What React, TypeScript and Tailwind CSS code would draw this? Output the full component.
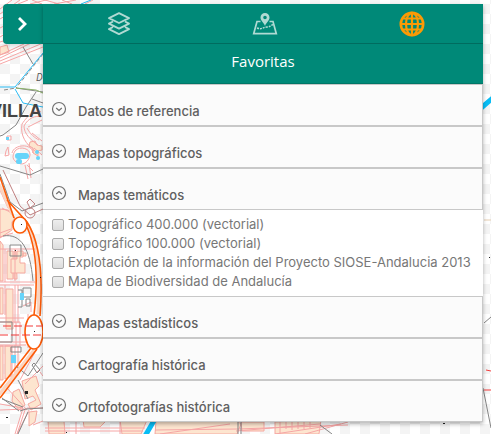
import React from "react";

const CheckerBackground = () => (
  <svg className="absolute inset-0 size-full" aria-hidden="true">
    <defs>
      <pattern id="checker" width="20" height="20" patternUnits="userSpaceOnUse">
        <rect width="20" height="20" fill="#fff" />
        <path d="M0 4h10v10H0zM10 14h10v6H10zM10 0h10v4H10z" fill="#f4f4f4" />
      </pattern>
    </defs>
    <rect width="100%" height="100%" fill="url(#checker)" />
  </svg>
);

const MapDrawing = () => (
  <svg className="absolute left-0 top-0" width="491" height="434" viewBox="0 0 491 434" fill="none" aria-hidden="true">
    {/* city blocks */}
    <g fill="#fde5cf" stroke="#f5a8a0" strokeWidth="1">
      <path d="M0 47l7-2 2 7-9 3zM0 209l8 1 7 8-3 4v8l-12 8z" />
      <path d="M0 242l3 4v36H0zM6 290h7v40H6zM7 252h6v28H7zM0 289h3v26H0zM16 252h-2v28h3z" transform="translate(0 -1)" />
      <path d="M11 259h6v-8h6v6h-3v6h5v10H11zM23 253h3v3h-3z" />
      <path d="M0 346h3v34H0zM5 346h6v30l-6 3z" />
      <path d="M13 392l6-3 6 16-6 5-7-9zM22 381l14-5 3 10-4 4 6 14-10 6-3-6 8-4-3-4-8 3z" />
      <path d="M30 142l5-1 2 4 5 1v4l-4 1v5l-5-3v-5l-4-2z" />
      <path d="M29 412l8-1-2 11-6 4zM83 420h24l-7 7H84zM120 420h27l-6 14h-19zM156 421l80-1 5 4-4 10h-82zM241 422h23v9h-22zM275 422l46-2-2 14h-44z" />
      <path d="M48 421h16l1 13H49z" />
    </g>
    {/* streets */}
    <g stroke="#f6a6a6" strokeWidth="1">
      <path d="M0 9l12-9M0 14l20-14M0 19l5-3M0 28l4-2M0 37l5-3M0 42l20-6M0 58l31-15M0 61l43-18M0 64l43-17M0 55l24-11M18 4l10-4M30 4l16-4M32 0l10 4M45 0l14 4M54 4l22-4M62 0l10 4M85 4l8-4" />
      <path d="M22 124c6-9 14-16 19-12M22 124c-2 12 4 20 13 27M24 126c4-8 12-11 17-9M24 126c0 8 7 14 14 19M27 128c3 6 8 10 12 12M28 127l14-7M32 133l10 8M15 151c5-6 16-2 15 4s-6 11-12 8-6-7-3-12zM12 153c2-9 20-10 21 0M25 165l3 14M29 163l2 15M27 165l6 6M6 151l2-4 1 8-4 1zM7 136h4v4H7zM34 148l8 7" />
      <path d="M0 186l10 22M0 190l8 18M10 212l-8-4M0 237l13-4M0 233l11-4" />
      <path d="M0 282h35M0 285h34M0 249h36M5 249v33M15 249v32M18 285v38M15 285v38M5 285v30M0 342h26M0 345h26M12 345v32M15 345v29M18 346v25M0 318h24M0 322h20v24H0M16 322v24M28 314v34M23 306l8-4v10" />
      <path d="M35 352L20 380M43 366L25 384M40 372l3 4M7 388l20 22M0 410l27-1M0 404l23 4-8 26M29 410l-12 24M27 408h16M33 425l10-4M25 410l-8 24" />
      <path d="M45 428h100M45 431h98M76 421v13M120 421v13M155 430l83-1 110-4M160 434l70-10M236 431l84-7M275 434l66-10M305 434l43-12M280 421v13M286 421v8M292 421v9M298 421v8M304 421v8M310 421v7" />
    </g>
    {/* railways, walls and survey lines */}
    <g stroke="#858585" strokeWidth="1">
      <path d="M23 47l10 17M36 92l-10 15-10 18-13 10-3 1M16 88l27 4M32 99l11 4M0 166l30 9 13-6M0 174l10 28 12 9 21-8M3 236c18-3 27 12 30 45" />
      <path d="M10 245h11v11H10zM23 288h8v9h-8zM26 299h4v7h-4zM18 290h4v17h-4M0 322h12v20H0M11 347h10v5H11zM34 363l6 7-3 3-5-8zM2 398l17 13M2 399l21 8M18 380l10 19M28 376l-12-10M43 353L28 376M20 411l6-2 17-1M28 412l-10 22M238 421v13M241 421v13M483 388l8 40M484 323l7-6M317 421l16-4M320 425l12 9" />
    </g>
    <path d="M43 54L16 88M4 90l12-2" stroke="#888" strokeDasharray="4 2" />
    <path d="M3 170l17 36 10 9 13-6M27 202l3-3 5 5-5 4zM25 213a5 5 0 1 0 10 0a5 5 0 1 0-10 0" stroke="#c08080" />
    <path d="M16 88l20 2 7 3" stroke="#8db36b" />
    <path d="M0 87h15l28-34M15 89l8 14 20 4M81 4L91 0" stroke="#2bbcf5" />
    <path d="M145 436l10-17M480 109l14-12" stroke="#08bdf5" strokeWidth="5" />
    <g fill="#67d4fa">
      <rect x="15" y="153" width="14" height="6" rx="3" />
      <rect x="16" y="159" width="6" height="5" rx="2" />
      <circle cx="37" cy="152" r="2" />
      <circle cx="38" cy="158" r="2" />
      <path d="M20 293h4v7h-4zM11 355h5v8h-5zM6 137h3v3H6z" />
    </g>
    <g stroke="#fbd5c0" strokeWidth="3">
      <path d="M24 220c14 15 16 45 14 94M-2 396l36-46M-2 182l14 32" />
    </g>
    <g stroke="#fc5b08" strokeWidth="1.6">
      <path d="M0 177l14 41M7 200l20 22c13 20 16 55 13 94M27 227c8 18 12 45 7 88M0 388l31-40M0 398l37-49" />
      <ellipse cx="20" cy="225" rx="7" ry="8" fill="#fff" />
      <ellipse cx="34" cy="332" rx="9" ry="17" fill="#fff" />
    </g>
    <path d="M3 326h40M0 335h43M486 370l5 1M484 390h7" stroke="#f13b3b" strokeDasharray="8 3" />
    <path d="M484 220h7" stroke="#e5cdb0" />
    <g fill="#222">
      <path d="M25 391h3v3h-3zM15 250h1v1h-1zM34 331h1v1h-1zM21 224h1v1h-1zM40 277h1v1h-1zM489 257h1v1h-1zM443 423h2v1h-2zM6 417h2v1h-2zM66 432h1v1h-1z" />
    </g>
  </svg>
);

const LayersIcon = () => (
  <svg width="24" height="24" viewBox="0 0 24 24" fill="none" stroke="#b0dad3" strokeWidth="1.9" strokeLinejoin="round" aria-hidden="true">
    <path d="M12 1.2l10 4.9-10 4.9-10-4.9zM6 9.5l-4 2.2 10 4.9 10-4.9-4-2.2M6 15l-4 2.2 10 4.9 10-4.9-4-2.2" />
  </svg>
);

const MapPinIcon = () => (
  <svg width="26" height="24" viewBox="0 0 26 24" fill="none" aria-hidden="true">
    <path d="M8.5 9.5H5L1.7 21.7h22.6L21 9.5h-3.5" stroke="#b0dad3" strokeWidth="1.7" />
    <path fillRule="evenodd" d="M13 1a4.5 4.5 0 0 1 4.5 4.5C17.5 9 14 10.5 13 14c-1-3.5-4.5-5-4.5-8.5A4.5 4.5 0 0 1 13 1zm0 2.7a1.8 1.8 0 1 0 0 3.6 1.8 1.8 0 0 0 0-3.6z" fill="#b0dad3" />
    <path d="M5 16c5 2 6-1 10-1s4-3 7-2" stroke="#b0dad3" strokeWidth="1.5" strokeDasharray="2 1" />
  </svg>
);

const GlobeIcon = () => (
  <svg width="26" height="26" viewBox="0 0 26 26" fill="none" stroke="#fb9a05" strokeWidth="2.2" aria-hidden="true">
    <circle cx="13" cy="13" r="11.2" strokeWidth="2.6" />
    <ellipse cx="13" cy="13" rx="6" ry="11.2" />
    <path d="M13 2v22M2 13h22M4 7.5h18M4 18.5h18" />
  </svg>
);

const CircleChevron = ({ open }: { open: boolean }) => (
  <svg className="shrink-0" width="16" height="16" viewBox="0 0 16 16" fill="none" stroke="#707070" strokeWidth="1.2" aria-hidden="true">
    <circle cx="8" cy="8" r="6.5" />
    <path d={open ? "M5.2 9L8 6.5 10.8 9" : "M5.2 7L8 9.5 10.8 7"} />
  </svg>
);

const groups = [
  { title: "Datos de referencia", layers: [] },
  { title: "Mapas topográficos", layers: [] },
  {
    title: "Mapas temáticos",
    layers: [
      "Topográfico 400.000 (vectorial)",
      "Topográfico 100.000 (vectorial)",
      "Explotación de la información del Proyecto SIOSE-Andalucia 2013",
      "Mapa de Biodiversidad de Andalucía",
    ],
  },
  { title: "Mapas estadísticos", layers: [] },
  { title: "Cartografía histórica", layers: [] },
  { title: "Ortofotografías histórica", layers: [] },
];

const tabs = [
  { label: "Capas", icon: <LayersIcon /> },
  { label: "Mapas", icon: <MapPinIcon /> },
  { label: "Favoritas", icon: <GlobeIcon /> },
];

export default function App() {
  return (
    <div className="relative min-h-screen overflow-hidden bg-white font-['Inter',sans-serif]">
      <CheckerBackground />
      <MapDrawing />
      <span className="absolute top-[70px] left-9 font-['Open_Sans',sans-serif] text-[10px] text-[#555] italic">De</span>
      <span className="absolute top-[101px] -left-2.5 font-['Liberation_Sans',sans-serif] text-[18px] leading-5 font-bold text-[#444]">VILLA</span>

      <div className="relative flex items-start pt-1 pr-2 pl-[3px]">
        <button type="button" aria-label="Cerrar panel" className="flex h-10 w-10 shrink-0 items-center justify-center rounded-l bg-[#008978] shadow-md">
          <svg width="12" height="16" viewBox="0 0 12 16" fill="none" stroke="#fff" strokeWidth="2.8" aria-hidden="true">
            <path d="M2 2l6 6-6 6" />
          </svg>
        </button>
        <main className="min-w-0 flex-1 bg-white shadow-[0_2px_4px_rgba(0,0,0,0.3)]">
          <nav className="grid h-10 grid-cols-3 border-b border-[#006c5f] bg-[#008978]">
            {tabs.map((tab) => (
              <button key={tab.label} type="button" aria-label={tab.label} className="flex items-center justify-center pl-[5px]">
                {tab.icon}
              </button>
            ))}
          </nav>
          <h1 className="flex h-10 items-center justify-center border-b border-[#007667] bg-[#008978] pb-1 font-['Open_Sans',sans-serif] text-[15px] text-white">Favoritas</h1>
          {groups.map((group) => {
            const open = group.layers.length > 0;
            return (
              <section key={group.title}>
                <button type="button" aria-expanded={open} className="flex h-[42px] w-full items-center gap-[11px] border border-l-0 border-[#c8c8c8] bg-[#fbfbfb] px-2 pt-2 text-left">
                  <CircleChevron open={open} />
                  <span className="pt-1 text-[13px] leading-5 font-medium text-[#606060]">{group.title}</span>
                </button>
                {open && (
                  <ul className="px-[9px] py-[5px]">
                    {group.layers.map((layer) => (
                      <li key={layer}>
                        <label className="flex h-[19px] items-center gap-1 text-[13px] whitespace-nowrap text-[#777]">
                          <input type="checkbox" className="size-3 shrink-0 appearance-none rounded-[2px] border border-[#aaa] bg-linear-to-b from-[#eee] to-[#ddd] checked:bg-[#008978]" />
                          {layer}
                        </label>
                      </li>
                    ))}
                  </ul>
                )}
              </section>
            );
          })}
        </main>
      </div>
    </div>
  );
}
